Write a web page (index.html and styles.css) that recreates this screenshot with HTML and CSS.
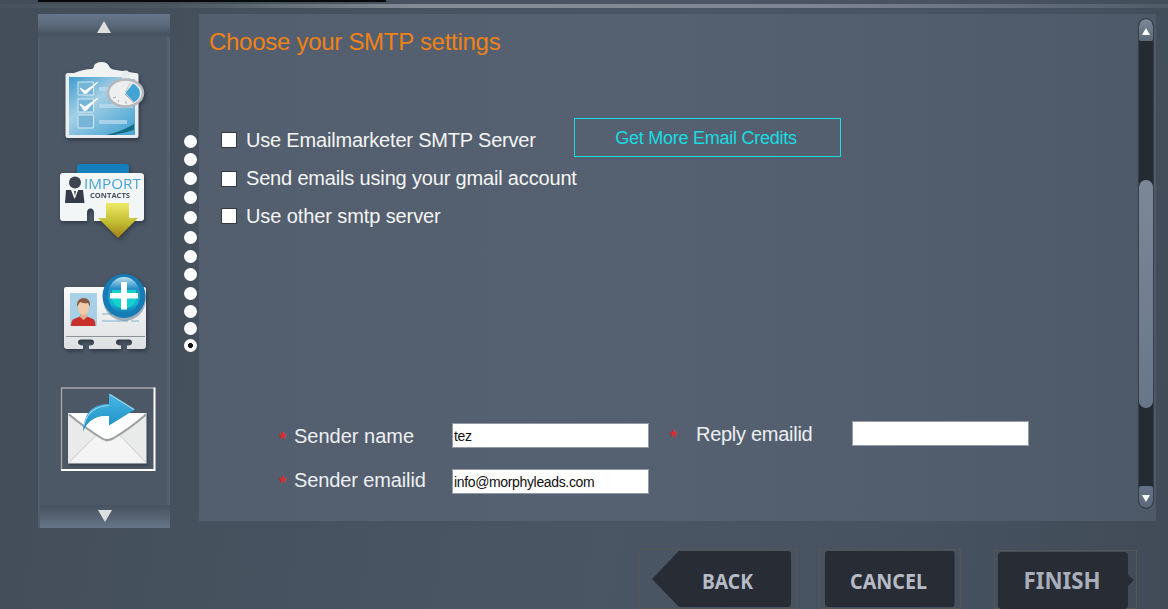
FILE: index.html
```html
<!DOCTYPE html>
<html lang="en">
<head>
<meta charset="utf-8">
<title>SMTP settings</title>
<link rel="stylesheet" href="styles.css">
</head>
<body>
<div class="window">
  <div class="titlebar"><div class="titlebar-dark"></div></div>
  <div class="main">
    <nav class="sidebar">
      <div class="side-scroll up"><svg width="14" height="12" viewBox="0 0 14 12"><path d="M7 0L14 12H0Z" fill="#dedfdf"/></svg></div>
      <div class="side-items">
        <svg class="icon" width="96" height="90" viewBox="57 57 96 90">
          <defs>
            <linearGradient id="board" x1="0" y1="0" x2=".8" y2="1"><stop offset="0" stop-color="#3c9bd0"/><stop offset=".45" stop-color="#a5cfe4"/><stop offset="1" stop-color="#4ba7d4"/></linearGradient>
          </defs>
          <rect x="65.500" y="73" width="73" height="65" rx="2.500" fill="#e9edef"/>
          <path d="M69 76H135V135H69Z" fill="url(#board)"/>
          <path d="M106 135Q121 132 134 124V130Q123 133 114 135Z" fill="#166b83"/>
          <path d="M69 76L74 73Q84 69 92 69Q94 68 94 65.500Q96 62 101.500 62Q107 62 109 66Q110 69 113 69.500L135 73Q138 75 138 79H131Q127 76 121 77H70Z" fill="#f1f3f3"/>
          <path d="M78 82H93.500V95H78ZM78 99H93.500V112H78ZM78 115H93.500V128H78Z" fill="#75b5d8" stroke="#d5e8f2" stroke-width="1"/>
          <path d="M80 88L85 91L98 82L86 93.500H84ZM80 104L85 107L98 98L86 110.500H84Z" fill="#fff" stroke="#fff"/>
          <path d="M99 87H109V91H99ZM99 104H133V108H99ZM99 120H127V124H99Z" fill="#bdddec" opacity=".7"/>
          <rect x="122" y="70.500" width="7" height="10" rx="3" fill="#e8ebec"/>
          <ellipse cx="125.500" cy="93" rx="17.500" ry="13.500" fill="#eceeef" stroke="#b3b8bc" stroke-width="2.500"/>
          <path d="M125.500 93L133 83.500Q140 87 140 94Q139 100 134 102Z" fill="#41a4d5"/>
          <path d="M125.500 92L130 83" stroke="#bfc6ca"/>
          <path d="M125 94L134 102.500" stroke="#8b98a4"/>
          <path d="M113 98L116 97M118 102L119 100M126 104V101" stroke="#a5abaf"/>
        </svg>
        <svg class="icon" width="96" height="90" viewBox="56 157 96 90">
          <defs><linearGradient id="arrow" x1="0" y1="0" x2="0" y2="1"><stop offset="0" stop-color="#eee968"/><stop offset=".55" stop-color="#c0be31"/><stop offset="1" stop-color="#a67c18"/></linearGradient></defs>
          <path d="M77 174V167Q77 164 80 164H126Q129 164 129 167V174Z" fill="#147fbd"/>
          <path d="M63 173H140Q144 173 144 176V218Q144 221 141 221H94V213Q94 208.500 90.500 208.500Q87 208.500 87 213V221H63Q60 221 60 218V176Q60 173 63 173Z" fill="#f3f6f7"/>
          <circle cx="75" cy="182.500" r="6" fill="#3d4552"/>
          <path d="M65 203L66 190H71L74.500 199L78 190H83L84.500 203Z" fill="#343c49"/>
          <path d="M72 190H78L75 198Z" fill="#fff"/><path d="M74 191H76L75 196Z" fill="#343c49"/>
          <text class="import-word" x="84" y="189" textLength="57" lengthAdjust="spacingAndGlyphs">IMPORT</text>
          <text class="contacts-word" x="90" y="197.500" textLength="40" lengthAdjust="spacingAndGlyphs">CONTACTS</text>
          <path d="M106 203H129V218H138L118 238L98 218H106Z" fill="url(#arrow)"/>
        </svg>
        <svg class="icon" width="96" height="90" viewBox="57 268 96 90">
          <defs>
            <linearGradient id="plus" x1="0" y1="0" x2="0" y2="1"><stop offset="0" stop-color="#bfe2ef"/><stop offset=".32" stop-color="#268ec5"/><stop offset=".75" stop-color="#13b5d2"/><stop offset="1" stop-color="#147cb6"/></linearGradient>
            <linearGradient id="card" x1="0" y1="0" x2="0" y2="1"><stop offset="0" stop-color="#fafafa"/><stop offset="1" stop-color="#dde0e2"/></linearGradient>
          </defs>
          <path d="M66 287H144Q146 287 146 290V346Q146 349 143 349H127V345.500Q132 346 132 342.500Q132 339.500 129 339.500H119Q116 339.500 116 342.500Q116 345 121 345.500V349H89V345.500Q94 346 94 342.500Q94 339.500 91 339.500H81Q78 339.500 78 342.500Q78 345 83 345.500V349H67Q64 349 64 346V289Q64 287 66 287Z" fill="url(#card)"/>
          <path d="M66 336.500H145" stroke="#8c9297"/>
          <path d="M70 293H97V326H70Z" fill="#a8d0e6"/>
          <path d="M71 326Q71 320 74 319L80 316.500H87L93 319Q95.500 320 95.500 326Z" fill="#c8302c"/>
          <path d="M80 311H87V317L83.500 320L80 317Z" fill="#dfae8c"/>
          <ellipse cx="83.500" cy="307" rx="5.500" ry="8" fill="#f0cbaa"/>
          <path d="M77 307Q76 299 83 298Q91 298 90 307L88 303Q84 304 80 302Z" fill="#875c43"/>
          <path d="M102 314H112M102 321H128M131 321H139" stroke="#b4cfdf" stroke-width="2"/>
          <ellipse cx="124.500" cy="299" rx="21.500" ry="22" fill="#56707f" opacity=".5"/>
          <ellipse cx="124" cy="296" rx="21.500" ry="22" fill="#157cb6"/>
          <ellipse cx="124" cy="295" rx="16" ry="18" fill="url(#plus)"/>
          <path d="M112 290H136V300Q134 307 124 309Q114 307 112 300Z" fill="#14d0cf"/>
          <path d="M121 282H127V293H138V298.500H127V309.500H121V298.500H110V293H121Z" fill="#fff"/>
        </svg>
        <svg class="icon selected" width="96" height="85" viewBox="60 386.500 96 85">
          <defs><linearGradient id="share" x1="0" y1="0" x2="0" y2="1"><stop offset="0" stop-color="#48b8e5"/><stop offset="1" stop-color="#198dc1"/></linearGradient></defs>
          <path d="M61.500 470V387.500H154" fill="none" stroke="#a9a8aa" stroke-width="1.300"/>
          <path d="M61 469.500H154.500V387" fill="none" stroke="#fff" stroke-width="2"/>
          <g class="envelope">
            <path d="M68 412.500H146.500V463H68Z" fill="#e9ebeb"/>
            <path d="M69 462L97 434L107 441L119 434L146 462" fill="#f3f4f3" stroke="#c9cccc"/>
            <path d="M68.500 413H146.500Q132 427 113 438Q107 441 102 438Q85 427 68.500 413Z" fill="#fff"/>
            <path d="M69 414Q86 428 102 438Q107 441 113 438Q130 428 146 414" fill="none" stroke="#999e9f" stroke-width="2"/>
          </g>
          <path d="M83 431Q84 405 106 403.500H109V393L135 409L109 425V415.500H106Q90 415 83 431Z" fill="url(#share)"/>
          <path d="M84 425Q88 406 109 405M110 394L134 409" fill="none" stroke="#9bd6f1" stroke-width="1.200"/>
        </svg>
      </div>
      <div class="side-scroll down"><svg width="14" height="12" viewBox="0 0 14 12"><path d="M0 0H14L7 12Z" fill="#dedfdf"/></svg></div>
    </nav>
    <div class="steps">
      <i></i><i></i><i></i><i></i><i></i><i></i><i></i><i></i><i></i><i></i><i></i><i class="current"></i>
    </div>
    <section class="panel">
      <div class="content">
        <h1><span>Choose your SMTP settings</span></h1>
        <div class="options">
          <div class="option first"><b class="box"></b><span class="t1">Use Emailmarketer SMTP Server</span><a class="credits"><span>Get More Email Credits</span></a></div>
          <div class="option second"><b class="box"></b><span class="t2">Send emails using your gmail account</span></div>
          <div class="option third"><b class="box"></b><span class="t3">Use other smtp server</span></div>
        </div>
        <div class="form">
          <div class="fields">
            <div class="field"><em>*</em><label>Sender name</label><div class="input tez">tez</div></div>
            <div class="field email"><em>*</em><label>Sender emailid</label><div class="input">info@morphyleads.com</div></div>
          </div>
          <div class="field reply"><em>*</em><label>Reply emailid</label><div class="input"></div></div>
        </div>
      </div>
      <div class="scrollbar">
        <div class="cap top"><svg width="8" height="7" viewBox="0 0 8 7"><path d="M4 0L8 7H0Z" fill="#fff"/></svg></div>
        <div class="thumb"></div>
        <div class="cap bottom"><svg width="8" height="7" viewBox="0 0 8 7"><path d="M0 0H8L4 7Z" fill="#fff"/></svg></div>
      </div>
    </section>
  </div>
  <footer class="actions">
    <svg width="162" height="61" viewBox="638 548 162 61"><rect class="outline" x="639.500" y="549.500" width="157" height="59"/><path class="btn" d="M679 551H788Q791 551 791 554V604Q791 607 788 607H679L652 579Z"/><text x="702" y="589" textLength="51" lengthAdjust="spacingAndGlyphs">BACK</text></svg>
    <svg width="145" height="61" viewBox="818 548 145 61"><rect class="outline" x="819.500" y="549.500" width="141" height="59"/><rect class="btn" x="825" y="551" width="129.500" height="56" rx="3"/><text x="850" y="589" textLength="77" lengthAdjust="spacingAndGlyphs">CANCEL</text></svg>
    <svg width="147" height="61" viewBox="993 548 147 61"><rect class="outline" x="994.500" y="550.500" width="142" height="58"/><path class="btn" d="M1127 574L1134 580L1127 587Z"/><rect class="btn" x="998" y="552" width="130" height="57" rx="4"/><text x="1023.500" y="588.500" textLength="77" lengthAdjust="spacingAndGlyphs" class="finish">FINISH</text></svg>
  </footer>
</div>
</body>
</html>
```
FILE: styles.css
```css
* { box-sizing: border-box; }
body { margin: 0; overflow: hidden; font-family: "Liberation Sans", Arial, sans-serif; }
.window {
  width: 1168px; height: 609px; display: flex; flex-direction: column;
  background: linear-gradient(100deg, #434d59 0, #46515e 22%, #4a5664 55%, #465260 80%, #414b57 100%);
}
.titlebar { flex: none; height: 14px; background: linear-gradient(90deg, #48535f 0, #4b5663 15%, #858c98 36%, #7d8592 70%, #515c69 100%) 0 4px / 100% 4px no-repeat; }
.titlebar-dark { width: 348px; height: 2px; margin-left: 38px; background: #07090c; }
.main { flex: none; height: 514px; display: flex; align-items: flex-start; padding-left: 38px; }
.sidebar { width: 132px; height: 514px; display: flex; flex-direction: column; background: #4c5866; border-left: 2px solid #515d6b; border-right: 3px solid #546070; }
.side-scroll { flex: none; height: 23px; display: flex; justify-content: center; padding-top: 7px; margin: 0 -3px 0 -2px; }
.side-scroll.up { background: linear-gradient(#67768a, #5a687a 50%, #47525f 88%, #4c5866); }
.side-scroll.down { padding-top: 5px; background: linear-gradient(#465260, #56626f 45%, #66758a); margin-left: 0; }
.side-items { flex: 1; display: flex; flex-direction: column; padding: 20px 0 0 17px; }
.icon { flex: none; display: block; filter: drop-shadow(1px 2px 2px #2e3743); margin-bottom: 10px; }
.icon:nth-child(2) { margin: 0 0 21px -1px; }
.icon:nth-child(3) { margin-bottom: 28.5px; }
.icon.selected { margin: 0 0 0 3px; filter: none; }
.envelope { filter: drop-shadow(1px 2px 1px #333d48); }
.import-word { font: 15px "Open Sans", sans-serif; fill: #49a4d5; }
.contacts-word { font: bold 7.5px "Open Sans", sans-serif; fill: #46505d; }
.steps { width: 29px; padding-top: 121px; display: flex; flex-direction: column; align-items: center; gap: 5px; }
.steps i { flex: none; width: 13px; height: 13px; border-radius: 50%; background: #fff; margin-left: 12px; }
.steps i:nth-child(3), .steps i:nth-child(4), .steps i:nth-child(7), .steps i:nth-child(9) { margin-top: 1px; }
.steps i:nth-child(5) { margin-top: 1.5px; }
.steps i:nth-child(6) { margin-top: 2px; }
.steps i:nth-child(11), .steps i:nth-child(12) { margin-top: -1px; }
.steps .current { background: radial-gradient(circle, #111 0 2.2px, #fff 2.8px); }
.panel { width: 957px; height: 507px; display: flex; background: linear-gradient(90deg, #535f6f 0, #556171 45%, #525e6e 75%, #4d5967 100%); }
.content { width: 939px; }
h1 { margin: 0; padding: 12px 0 0 10px; height: 104px; font-size: 24px; line-height: 31px; font-weight: 400; color: #ef8217; letter-spacing: -.28px; }
.options { height: 304px; color: #f5f5f5; font-size: 20px; }
.option { height: 39px; display: flex; align-items: center; padding-left: 22px; white-space: nowrap; }
.option.third { height: 36px; }
.box { flex: none; width: 16px; height: 16px; border: 1px solid #333a43; background: #fff; margin-right: 9px; }
.t1 { width: 328px; padding-top: 5px; letter-spacing: -.19px; }
.t2 { letter-spacing: -.17px; }
.t3 { letter-spacing: -.1px; }
.option.first .box { margin-top: 4px; }
.option.second .box { margin-top: 4px; }
.t2 { margin-top: 3px; }
.option.third .box { margin-top: 3px; }
.t3 { margin-top: 4px; }
.credits { width: 267px; height: 39px; border: 1.5px solid #18dde3; display: flex; align-items: center; justify-content: center; padding-top: 2px; padding-right: 3px; color: #18dde3; font-size: 18px; letter-spacing: -.25px; }
.form { display: flex; color: #eeeff1; }
.fields { width: 450px; padding-left: 80px; }
.field { height: 46px; display: flex; align-items: flex-start; white-space: nowrap; }
.field em { width: 15px; padding-top: 7px; color: #db2b2b; font: 700 18px/20px "Liberation Sans", sans-serif; }
.field label { width: 158px; font-size: 20px; line-height: 29px; }
.field .input { width: 197px; height: 25px; margin-top: 1px; border: 1px solid #949aa3; background: #fff; color: #101010; font: 14px/24px "Liberation Sans", sans-serif; padding-left: 1px; letter-spacing: -.35px; }
.fields .email label { line-height: 25px; letter-spacing: -.12px; }
.fields .email em { padding-top: 5px; }
.field.reply { padding-left: 21px; margin-top: -2px; }
.reply em { width: 26px; }
.reply label { width: 156px; letter-spacing: -.28px; }
.reply .input { width: 177px; }
.scrollbar { width: 16px; height: 491px; margin-top: 4px; border: 1px solid #353e49; border-radius: 8px; overflow: hidden; background: #252b33; display: flex; flex-direction: column; }
.cap { flex: none; height: 22px; display: flex; justify-content: center; padding-top: 9px; background: #6d7887; }
.cap.top { background: linear-gradient(#7d8999, #5b6878); border-radius: 8px 8px 3px 3px; }
.cap.bottom { background: linear-gradient(#64738a, #5b6877); border-radius: 3px 3px 8px 8px; }
.thumb { height: 228px; margin: 139px 0 78px; border-radius: 8px; background: linear-gradient(#7c8797, #69768a); }
.actions { flex: none; height: 81px; padding: 20px 0 0 638px; display: flex; align-items: flex-start; gap: 18px; }
.actions svg { display: block; flex: none; }
.actions svg:nth-child(2) { margin-right: 12px; }
.outline { fill: none; stroke: #535855; }
.btn { fill: #272c35; }
.actions text { font: 700 22px "Noto Sans", "Open Sans", sans-serif; fill: #b7bbc6; }
.actions .finish { font-size: 23.5px; fill: #a9aeba; }
```
